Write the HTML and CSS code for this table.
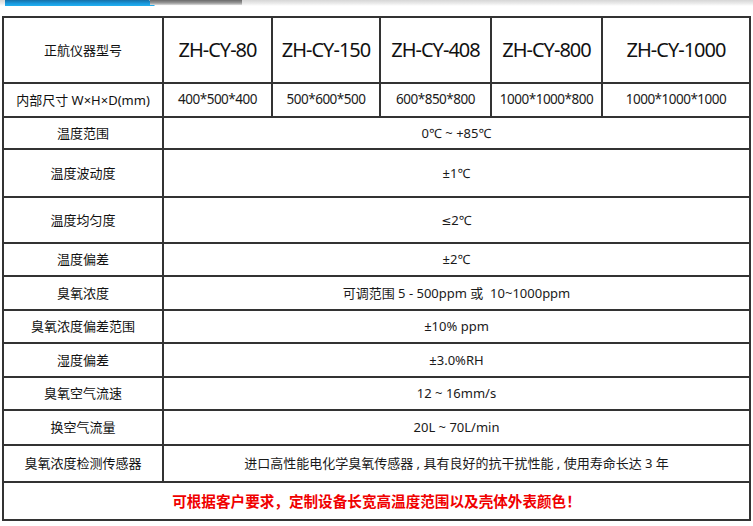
FILE: index.html
```html
<!DOCTYPE html>
<html lang="zh-CN">
<head>
<meta charset="utf-8">
<title>正航仪器型号</title>
<link rel="stylesheet" href="styles.css">
</head>
<body>
<div class="topbar">
  <div class="blue"></div>
  <div class="dark"></div>
</div>
<table class="spec">
  <colgroup>
    <col class="c0"><col class="c1"><col class="c2"><col class="c3"><col class="c4"><col class="c5">
  </colgroup>
  <tr class="r-head">
    <td class="label">正航仪器型号</td>
    <td class="model">ZH-CY-80</td>
    <td class="model">ZH-CY-150</td>
    <td class="model">ZH-CY-408</td>
    <td class="model">ZH-CY-800</td>
    <td class="model">ZH-CY-1000</td>
  </tr>
  <tr class="r-size">
    <td class="label">内部尺寸 W×H×D(mm)</td>
    <td class="dim">400*500*400</td>
    <td class="dim">500*600*500</td>
    <td class="dim">600*850*800</td>
    <td class="dim">1000*1000*800</td>
    <td class="dim">1000*1000*1000</td>
  </tr>
  <tr class="r32"><td class="label">温度范围</td><td class="val" colspan="5">0℃ ~ +85℃</td></tr>
  <tr class="r48"><td class="label">温度波动度</td><td class="val" colspan="5">±1℃</td></tr>
  <tr class="r46"><td class="label">温度均匀度</td><td class="val" colspan="5"><span class="sym">≤</span>2℃</td></tr>
  <tr class="r33"><td class="label">温度偏差</td><td class="val" colspan="5">±2℃</td></tr>
  <tr class="r34"><td class="label">臭氧浓度</td><td class="val" colspan="5">可调范围 5 - 500ppm 或&nbsp; 10~1000ppm</td></tr>
  <tr class="r33"><td class="label">臭氧浓度偏差范围</td><td class="val" colspan="5">±10% ppm</td></tr>
  <tr class="r34"><td class="label">湿度偏差</td><td class="val" colspan="5">±3.0%RH</td></tr>
  <tr class="r33"><td class="label">臭氧空气流速</td><td class="val" colspan="5">12 ~ 16mm/s</td></tr>
  <tr class="r35"><td class="label">换空气流量</td><td class="val" colspan="5">20L ~ 70L/min</td></tr>
  <tr class="r37"><td class="label">臭氧浓度检测传感器</td><td class="val" colspan="5">进口高性能电化学臭氧传感器 , 具有良好的抗干扰性能 , 使用寿命长达 3 年</td></tr>
  <tr class="r38"><td class="note" colspan="6">可根据客户要求，定制设备长宽高温度范围以及壳体外表颜色！</td></tr>
</table>
</body>
</html>
```

FILE: styles.css
```css
html, body {
  margin: 0;
  padding: 0;
  background: #ffffff;
}
body {
  width: 753px;
  height: 526px;
  overflow: hidden;
  font-family: "Noto Sans", "Noto Sans CJK SC", sans-serif;
  color: #1a1a1a;
}
.topbar {
  position: relative;
  height: 6px;
  background: linear-gradient(to bottom, #d6d6d6 0%, #ececec 60%, #ffffff 100%);
}
.blue {
  position: absolute;
  left: 5px;
  top: 0;
  width: 150px;
  height: 6px;
  background: linear-gradient(to bottom, #1670a8 0%, #1a9be0 60%, #22b0f0 100%);
  clip-path: polygon(0 0, 96% 0, 100% 100%, 0 100%);
}
.dark {
  position: absolute;
  left: 150px;
  top: 0;
  width: 92px;
  height: 5px;
  background: linear-gradient(to bottom, #6a6a6a 0%, #9a9a9a 60%, #dcdcdc 100%);
}
.spec {
  margin: 10px 0 0 2px;
  width: 749px;
  border-collapse: collapse;
  table-layout: fixed;
  border: 2px solid #333;
}
.spec td {
  border: 2px solid #333;
  padding: 0;
  text-align: center;
  vertical-align: middle;
  font-size: 13px;
  line-height: 1;
  white-space: nowrap;
}
.c0 { width: 160px; }
.c1 { width: 109px; }
.c2 { width: 108px; }
.c3 { width: 111px; }
.c4 { width: 111px; }
.c5 { width: 148px; }
.r-head { height: 66px; }
.r-size { height: 34px; }
.r32 { height: 32px; }
.r48 { height: 48px; }
.r46 { height: 46px; }
.r33 { height: 33px; }
.r34 { height: 34px; }
.r35 { height: 35px; }
.r37 { height: 37px; }
.r38 { height: 38px; }
.spec .label {
  font-size: 13px;
  color: #111;
}
.spec .model {
  font-size: 20px;
  letter-spacing: -1px;
  color: #111;
}
.spec .dim {
  font-size: 13.5px;
  letter-spacing: -0.5px;
}
.spec .val {
  font-size: 13px;
}
.sym {
  font-family: "DejaVu Sans", sans-serif;
  font-size: 12px;
}
.spec .note {
  color: #f00000;
  font-family: "Noto Sans CJK SC", sans-serif;
  font-weight: bold;
  font-size: 14.6px;
}
```
